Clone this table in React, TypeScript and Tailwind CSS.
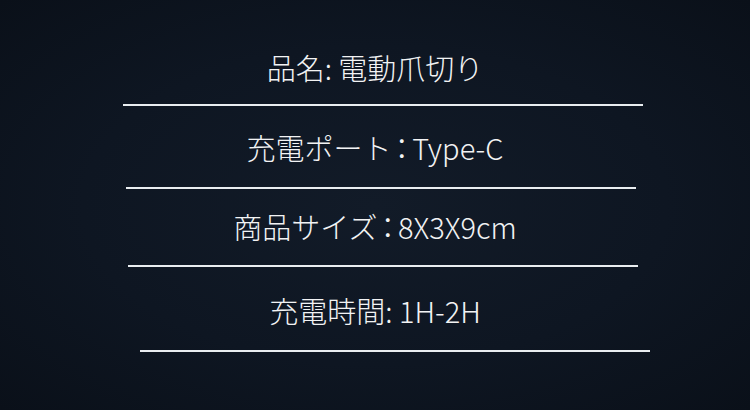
import React from "react";

const font = {
  fontFamily: '"Noto Sans CJK JP", "Noto Sans", sans-serif',
};

const Colon = () => (
  <span className="[font-feature-settings:'palt'] px-[3px]">：</span>
);

export default function App() {
  return (
    <div
      className="w-[750px] h-[410px] overflow-hidden flex flex-col bg-[radial-gradient(ellipse_at_center,#121b28_0%,#0e1622_55%,#0a1019_100%)] text-[#f2f3f4]"
      style={font}
    >
      <div className="h-[51px]" />
      <div className="h-[33px] leading-[33px] text-[29px] font-light text-center">品名: 電動爪切り</div>
      <div className="h-[20px]" />
      <div className="ml-[123px] w-[520px] h-[2px] bg-[#e9edf0]" />
      <div className="h-[25px]" />
      <div className="h-[33px] leading-[33px] text-[29px] font-light text-center">
        充電ポート<Colon />Type-C
      </div>
      <div className="h-[23px]" />
      <div className="ml-[126px] w-[510px] h-[2px] bg-[#e9edf0]" />
      <div className="h-[21px]" />
      <div className="h-[33px] leading-[33px] text-[29px] font-light text-center">
        商品サイズ<Colon />8X3X9cm
      </div>
      <div className="h-[22px]" />
      <div className="ml-[128px] w-[510px] h-[2px] bg-[#e9edf0]" />
      <div className="h-[27px]" />
      <div className="h-[33px] leading-[33px] text-[29px] font-light text-center">充電時間: 1H-2H</div>
      <div className="h-[23px]" />
      <div className="ml-[140px] w-[510px] h-[2px] bg-[#e9edf0]" />
    </div>
  );
}
